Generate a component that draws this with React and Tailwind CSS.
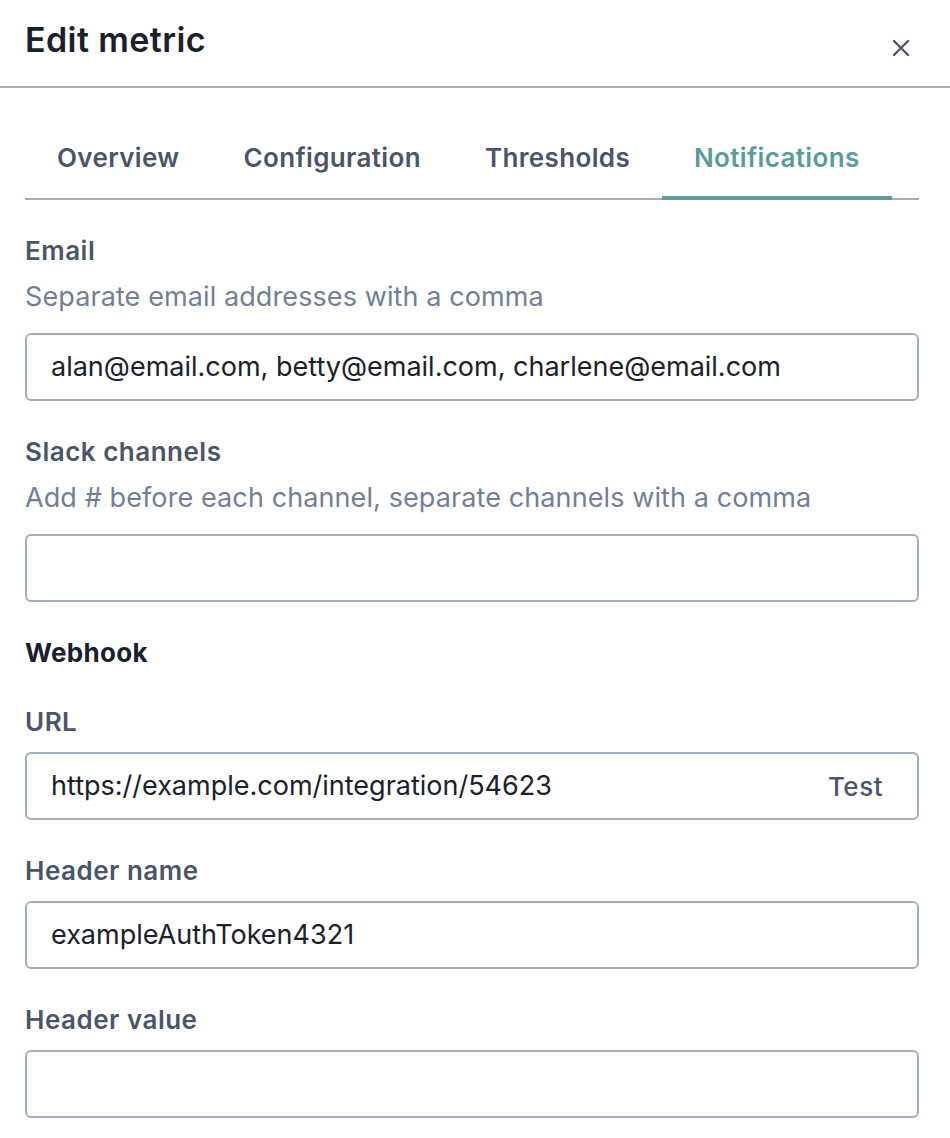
import React from 'react';

const font = { fontFamily: 'Inter, "Liberation Sans", sans-serif' };

const tabs = ['Overview', 'Configuration', 'Thresholds', 'Notifications'];

const Field = ({ label, help, value, action }) => (
  <div className="mt-[33px]">
    <div className={`text-[26px] leading-[36px] font-semibold tracking-[0.5px] text-[#4a5568] ${help ? 'mb-[10px]' : 'mb-[12px]'}`}>{label}</div>
    {help && <div className="text-[27px] leading-[36px] tracking-[0.1px] text-[#718096] mb-[18px]">{help}</div>}
    <div className="h-[68px] border-2 border-[#a0aec0] rounded-[6px] flex items-center pl-[24px] pr-[34px]">
      <input
        readOnly
        value={value}
        className="flex-1 min-w-0 bg-transparent outline-none text-[27px] text-[#1a202c]"
        style={font}
      />
      {action && <span className="text-[26px] font-medium tracking-[0.5px] text-[#4a5568]">{action}</span>}
    </div>
  </div>
);

export default function App() {
  return (
    <div className="w-[950px] h-[1138px] bg-white overflow-hidden" style={font}>
      <div className="h-[88px] border-b-2 border-[#a0aec0] flex items-start justify-between pl-[25px] pr-[40px] pt-[20px]">
        <h1 className="text-[34px] leading-[40px] font-semibold tracking-[0.4px] text-[#1a202c]">Edit metric</h1>
        <svg className="mt-[19px]" width="18" height="18" viewBox="0 0 18 18" fill="none" stroke="#4a5568" strokeWidth="2.4" strokeLinecap="round">
          <path d="M2 2L16 16M16 2L2 16" />
        </svg>
      </div>

      <div className="pl-[25px] pr-[31px]">
        <div className="mt-[52px] flex border-b-2 border-[#a0aec0]">
          {tabs.map(t => (
            <div
              key={t}
              className={`px-[32px] pb-[20px] text-[26px] leading-[36px] font-semibold tracking-[0.35px] ${t === 'Notifications' ? 'text-[#5a9a9c] border-b-4 border-[#5a9a9c] -mb-[2px] pb-[18px]' : 'text-[#4a5568]'}`}
            >
              {t}
            </div>
          ))}
        </div>

        <Field label="Email" help="Separate email addresses with a comma" value="alan@email.com, betty@email.com, charlene@email.com" />
        <Field label="Slack channels" help="Add # before each channel, separate channels with a comma" value="" />

        <div className="mt-[33px] text-[26px] leading-[36px] font-bold tracking-[0.3px] text-[#1a202c]">Webhook</div>
        <Field label="URL" value="https://example.com/integration/54623" action="Test" />
        <Field label="Header name" value="exampleAuthToken4321" />
        <Field label="Header value" value="" />
      </div>
    </div>
  );
}
